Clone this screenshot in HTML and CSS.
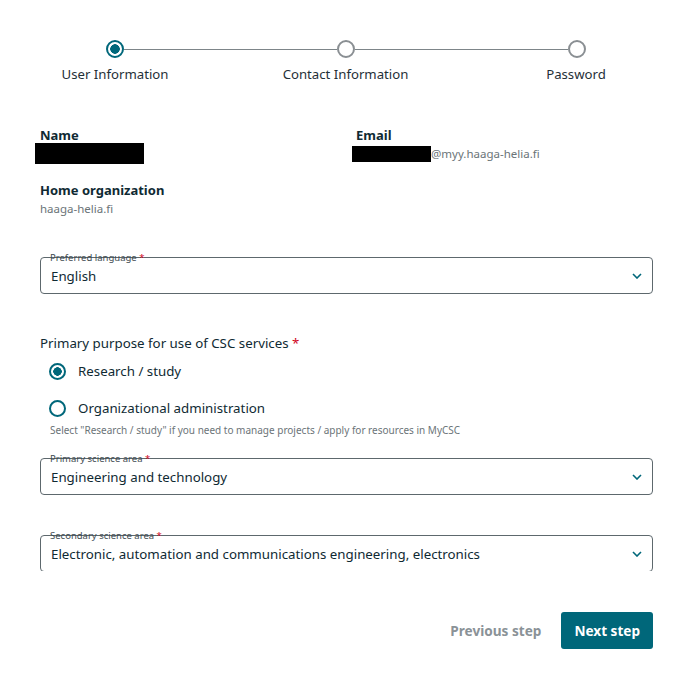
FILE: index.html
```html
<!DOCTYPE html>
<html lang="en">
<head>
<meta charset="utf-8">
<link rel="stylesheet" href="styles.css">
</head>
<body>
<div class="page">
  <div class="stepper">
    <div class="step-track">
      <span class="dot dot-active"></span>
      <span class="line"></span>
      <span class="dot"></span>
      <span class="line"></span>
      <span class="dot"></span>
    </div>
    <div class="step-labels">
      <span>User Information</span>
      <span>Contact Information</span>
      <span>Password</span>
    </div>
  </div>

  <div class="scroll">
    <div class="info-grid">
      <div class="info">
        <div class="info-label">Name</div>
        <div class="redact redact-name"></div>
      </div>
      <div class="info">
        <div class="info-label">Email</div>
        <div class="info-value"><span class="redact redact-email"></span>@myy.haaga-helia.fi</div>
      </div>
    </div>
    <div class="info org">
      <div class="info-label">Home organization</div>
      <div class="info-value">haaga-helia.fi</div>
    </div>

    <div class="select sel-lang">
      <span class="select-label">Preferred language <span class="req">*</span></span>
      <span class="select-value">English</span>
      <svg class="chev" width="10" height="6" viewBox="0 0 10 6"><path d="M1 1l4 4 4-4" fill="none" stroke="#00677a" stroke-width="1.6"/></svg>
    </div>

    <div class="purpose">
      <div class="purpose-title">Primary purpose for use of CSC services <span class="req">*</span></div>
      <label class="radio"><span class="rb rb-on"></span>Research / study</label>
      <label class="radio"><span class="rb"></span>Organizational administration</label>
      <div class="hint">Select "Research / study" if you need to manage projects / apply for resources in MyCSC</div>
    </div>

    <div class="select sel-primary">
      <span class="select-label">Primary science area <span class="req">*</span></span>
      <span class="select-value">Engineering and technology</span>
      <svg class="chev" width="10" height="6" viewBox="0 0 10 6"><path d="M1 1l4 4 4-4" fill="none" stroke="#00677a" stroke-width="1.6"/></svg>
    </div>

    <div class="select sel-secondary">
      <span class="select-label">Secondary science area <span class="req">*</span></span>
      <span class="select-value">Electronic, automation and communications engineering, electronics</span>
      <svg class="chev" width="10" height="6" viewBox="0 0 10 6"><path d="M1 1l4 4 4-4" fill="none" stroke="#00677a" stroke-width="1.6"/></svg>
    </div>
  </div>

  <div class="actions">
    <button class="btn btn-prev">Previous step</button>
    <button class="btn btn-next">Next step</button>
  </div>
</div>
</body>
</html>
```
FILE: styles.css
```css
* { box-sizing: border-box; }
body {
  margin: 0;
  background: #fff;
  font-family: "Noto Sans", sans-serif;
  color: #0f2a33;
}
.page {
  width: 690px;
  height: 684px;
  padding-top: 40px;
}
.step-track {
  display: flex;
  align-items: center;
  padding: 0 104px 0 106px;
}
.dot {
  width: 18px;
  height: 18px;
  border-radius: 50%;
  border: 2px solid #8a8f93;
  background: #fff;
  flex: none;
}
.dot-active {
  border: 2px solid #00677a;
  background: radial-gradient(circle, #00677a 0 4.5px, #fff 5px);
}
.line {
  flex: 1;
  height: 1px;
  background: #7d8589;
}
.step-labels {
  display: grid;
  grid-template-columns: 230px 231px 230px;
  margin-top: 7px;
  font-size: 13.2px;
  line-height: 18px;
  color: #1f3038;
  text-align: center;
}

.scroll {
  margin-top: 43px;
  padding: 7px 37px 0 40px;
  height: 445px;
  overflow: hidden;
}
.info-grid {
  display: grid;
  grid-template-columns: 316px 1fr;
  margin-top: -7px;
}
.info-label {
  font-size: 13px;
  font-weight: 700;
  line-height: 18px;
  color: #0f2a33;
}
.info-value {
  font-size: 11.5px;
  color: #6b7478;
  line-height: 18px;
  margin-top: 1px;
}
.redact {
  background: #000;
  display: block;
}
.redact-name {
  width: 109px;
  height: 21px;
  margin-left: -5px;
  margin-top: -1px;
}
.redact-email {
  display: inline-block;
  width: 79px;
  height: 16px;
  margin-left: -4px;
  vertical-align: -4px;
}
.org { margin-top: 17px; }

.select {
  position: relative;
  border: 1px solid #5d686d;
  border-radius: 4px;
  padding: 0 10px;
  height: 37px;
  display: flex;
  align-items: center;
  justify-content: space-between;
}
.select-label {
  position: absolute;
  left: 9px;
  top: -6.5px;
  font-size: 9.5px;
  line-height: 12px;
  color: #3d4a50;
}
.req { color: #d0021b; }
.select-value {
  font-size: 13.3px;
  color: #0f2a33;
  margin-top: 1px;
}
.chev { margin-top: 1px; }
.sel-lang { margin-top: 39px; }

.purpose { margin-top: 39px; }
.purpose-title {
  font-size: 13.3px;
  line-height: 20px;
  color: #0f2a33;
}
.radio {
  display: flex;
  align-items: center;
  font-size: 13.3px;
  color: #0f2a33;
  height: 20px;
}
.radio:first-of-type { margin-top: 8px; }
.radio + .radio { margin-top: 17px; }
.rb {
  width: 17px;
  height: 17px;
  border-radius: 50%;
  border: 2px solid #00677a;
  margin: 0 12px 0 9px;
  flex: none;
}
.rb-on {
  background: radial-gradient(circle, #00677a 0 4px, #fff 4.5px);
}
.hint {
  font-size: 10px;
  color: #6b7478;
  margin-top: 5px;
  padding-left: 10px;
}
.sel-primary { margin-top: 21px; }
.sel-secondary { margin-top: 40px; }

.actions {
  display: flex;
  justify-content: flex-end;
  align-items: center;
  gap: 7px;
  padding-right: 37px;
  margin-top: 41px;
}
.btn {
  font-family: "Noto Sans", sans-serif;
  font-size: 13.6px;
  font-weight: 700;
  border: none;
  border-radius: 3px;
  height: 37px;
  padding: 0 13px;
  cursor: pointer;
}
.btn-prev {
  background: transparent;
  color: #8a9297;
}
.btn-next {
  background: #00677a;
  color: #fff;
}
```
